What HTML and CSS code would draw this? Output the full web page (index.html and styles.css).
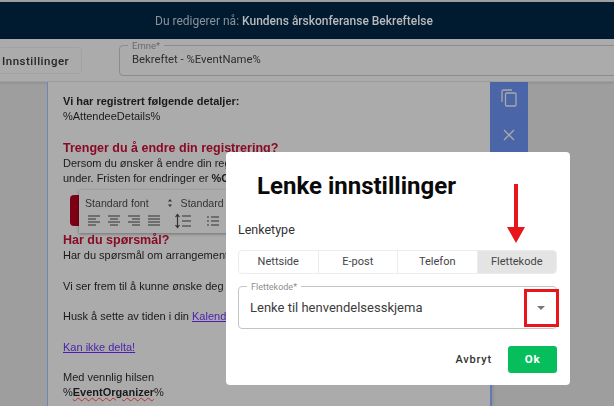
FILE: index.html
```html
<!DOCTYPE html>
<html lang="no">
<head>
  <meta charset="UTF-8" />
  <title>Lenke innstillinger</title>
  <link rel="stylesheet" href="styles.css">
</head>
<body>
<div class="topbar">Du redigerer nå: <span class="topbar-name">Kundens årskonferanse Bekreftelse</span></div>
<div class="subbar">
  <div class="settings-tab">Innstillinger</div>
  <div class="subject">
    <span class="subject-label">Emne*</span>
    Bekreftet - %EventName%
  </div>
</div>
<div class="workspace">
  <div class="mail">
    <p class="strong">Vi har registrert følgende detaljer:</p>
    <p>%AttendeeDetails%</p>
    <h2 class="first-head">Trenger du å endre din registrering?</h2>
    <p>Dersom du ønsker å endre din registrering</p>
    <p>under. Fristen for endringer er <b>%C</b></p>
    <div class="cta-row"><span class="cta"></span></div>
    <h2>Har du spørsmål?</h2>
    <p>Har du spørsmål om arrangementet</p>
    <p class="gap">Vi ser frem til å kunne ønske deg</p>
    <p class="gap">Husk å sette av tiden i din <a href="#">Kalender</a></p>
    <p class="gap"><a href="#">Kan ikke delta!</a></p>
    <p class="gap">Med vennlig hilsen</p>
    <p>%<b class="squiggle">EventOrganizer</b>%</p>
  </div>
  <div class="side-actions">
    <svg width="16" height="18" viewBox="0 0 16 18" fill="none" stroke="#a9a9a9" stroke-width="1.3"><path d="M11 1H2.500A1.500 1.500 0 0 0 1 2.500V13"/><rect x="4.500" y="4" width="10.500" height="13" rx="1.200"/></svg>
    <svg width="12" height="12" viewBox="0 0 12 12" stroke="#a9a9a9" stroke-width="1.300"><path d="M1 1l10 10M11 1L1 11"/></svg>
  </div>
  <div class="toolbar">
    <div class="tool-row">
      <span class="tool-font">Standard font</span>
      <svg class="tool-caret" width="6" height="10" viewBox="0 0 6 10" fill="#333"><path d="M3 1l2 2.500H1zM3 9L1 6.500h4z"/></svg>
      <span>Standard</span>
    </div>
    <div class="tool-row tool-icons">
      <svg width="16" height="14" viewBox="0 0 16 14" stroke="#333" stroke-width="1.1"><path d="M2 2h12M2 5h8M2 8h12M2 11h8"/></svg>
      <svg width="16" height="14" viewBox="0 0 16 14" stroke="#333" stroke-width="1.1"><path d="M2 2h12M4 5h8M2 8h12M4 11h8"/></svg>
      <svg width="16" height="14" viewBox="0 0 16 14" stroke="#333" stroke-width="1.1"><path d="M2 2h12M6 5h8M2 8h12M6 11h8"/></svg>
      <svg width="16" height="14" viewBox="0 0 16 14" stroke="#333" stroke-width="1.1"><path d="M2 2h12M2 5h12M2 8h12M2 11h12"/></svg>
      <svg class="tool-lh" width="18" height="16" viewBox="0 0 18 16" fill="none" stroke="#333" stroke-width="1.2"><path d="M3.500 2v12M1.500 4l2-2.500 2 2.500M1.500 12l2 2.500 2-2.500M8 3h9M8 8h9M8 13h9"/></svg>
      <svg class="tool-list" width="14" height="14" viewBox="0 0 14 14" stroke="#333" stroke-width="1.1"><path d="M1 3h2M5 3h8M1 7h2M5 7h8M1 11h2M5 11h8"/></svg>
    </div>
  </div>
</div>

<div class="dialog">
  <h1 class="dialog-title">Lenke innstillinger</h1>
  <div class="dialog-label">Lenketype</div>
  <div class="link-types">
    <div class="link-type">Nettside</div>
    <div class="link-type">E-post</div>
    <div class="link-type">Telefon</div>
    <div class="link-type selected">Flettekode</div>
  </div>
  <div class="merge-field">
    <span class="merge-label">Flettekode*</span>
    <span>Lenke til henvendelsesskjema</span>
    <span class="merge-caret"></span>
  </div>
  <div class="dialog-actions">
    <span class="cancel">Avbryt</span>
    <span class="ok">Ok</span>
  </div>
</div>

<div class="arrow-line"></div>
<div class="arrow-head"></div>
<div class="red-box"></div>
</body>
</html>
```

FILE: styles.css
```css
html, body {
  margin: 0;
  height: 406px;
  overflow: hidden;
}
body {
  font-family: "Liberation Sans", Arial, sans-serif;
  background: #9e9e9e;
  position: relative;
  color: #1a1a1a;
  padding-top: 2px;
  box-sizing: border-box;
  filter: blur(0.3px);
}
.topbar {
  height: 37px;
  background: #001a30;
  color: #8b929a;
  font-family: Roboto, sans-serif;
  font-size: 12px;
  display: flex;
  align-items: center;
  justify-content: center;
  gap: 3px;
  padding-right: 26px;
}
.topbar-name {
  color: #b8babc;
  font-weight: 500;
}
.subbar {
  height: 43px;
  background: #ababab;
  border-bottom: 1px solid #a0a0a0;
  box-shadow: 0 1px 2px rgba(0,0,0,0.12);
  display: flex;
  align-items: flex-start;
  gap: 37px;
  font-family: Roboto, sans-serif;
  box-sizing: border-box;
}
.settings-tab {
  width: 84px;
  height: 27px;
  margin-top: 8px;
  margin-left: -2px;
  padding-left: 3px;
  border: 1px solid #a2a2a2;
  border-radius: 4px;
  font-size: 11.500px;
  font-weight: 500;
  letter-spacing: 0.5px;
  line-height: 27px;
  color: #262626;
  box-sizing: border-box;
  flex: none;
}
.subject {
  position: relative;
  flex: 1;
  height: 31px;
  margin-top: 6px;
  margin-right: -10px;
  padding-left: 12px;
  border: 1px solid #8c8c8c;
  border-radius: 4px;
  font-size: 11.300px;
  line-height: 28px;
  color: #2e2e2e;
  box-sizing: border-box;
}
.subject-label {
  position: absolute;
  top: -6px;
  left: 8px;
  padding: 0 4px;
  background: #ababab;
  font-size: 9.500px;
  line-height: 11px;
  color: #6a6a6a;
}
.workspace {
  position: relative;
  height: 324px;
}
.mail {
  position: absolute;
  top: 0;
  left: 47px;
  width: 445px;
  height: 100%;
  padding: 12px 0 0 15px;
  box-sizing: border-box;
  background: #ababab;
  border-left: 1px solid #6d86b8;
  border-right: 2px solid #5f7ab4;
  box-shadow: 2px 0 2px rgba(0,0,0,0.08);
  font-size: 11px;
  line-height: 15.250px;
}
.mail p {
  margin: 0;
  white-space: nowrap;
}
.mail .strong {
  font-weight: bold;
}
.mail .gap {
  margin-top: 15.250px;
}
.mail h2 {
  margin: 0;
  font-size: 12.500px;
  line-height: 16px;
  color: #8a0a25;
}
.mail .first-head {
  margin-top: 15.500px;
}
.mail a {
  color: #4a1eb0;
}
.cta-row {
  height: 45.500px;
  padding-top: 8px;
  box-sizing: border-box;
}
.cta {
  display: block;
  width: 20px;
  height: 31px;
  border-radius: 4px;
  background: #7d0015;
  margin-left: 7px;
}
.squiggle {
  text-decoration: underline wavy #c03030 1px;
}
.side-actions {
  position: absolute;
  top: 0;
  left: 490px;
  width: 38px;
  height: 72px;
  background: #4a66a8;
  display: flex;
  flex-direction: column;
  align-items: center;
  padding-top: 7px;
  gap: 22px;
  box-sizing: border-box;
}
.toolbar {
  position: absolute;
  top: 108px;
  left: 79px;
  width: 170px;
  height: 43px;
  background: #ababab;
  box-shadow: 0 1px 3px rgba(0,0,0,0.35);
  padding: 5px 6px 0;
  box-sizing: border-box;
  font-size: 10.600px;
  color: #333;
  white-space: nowrap;
}
.tool-row {
  display: flex;
  align-items: center;
  height: 15px;
}
.tool-caret {
  margin: 0 8px 0 18px;
  flex: none;
}
.tool-icons {
  gap: 4px;
  margin-top: 3px;
  margin-left: 1px;
}
.tool-lh {
  margin-left: 8px;
}
.tool-list {
  margin-left: 10px;
}
.dialog {
  position: absolute;
  left: 226px;
  top: 152px;
  width: 344px;
  height: 233px;
  background: #fff;
  border-radius: 4px;
  padding: 0 13px 0 12px;
  box-sizing: border-box;
  font-family: Roboto, sans-serif;
}
.dialog-title {
  margin: 19px 0 0 19px;
  font-size: 24px;
  line-height: 30px;
  font-weight: 700;
  color: #0a0a0a;
}
.dialog-label {
  margin-top: 21px;
  font-size: 12.500px;
  line-height: 16px;
  color: #333;
}
.link-types {
  display: flex;
  height: 24px;
  margin-top: 12px;
  border: 1px solid #ececec;
  border-radius: 4px;
  font-size: 11px;
  color: #444;
  overflow: hidden;
  box-sizing: border-box;
}
.link-type {
  flex: 1;
  text-align: center;
  line-height: 22px;
  border-left: 1px solid #ececec;
}
.link-type:first-child {
  border-left: none;
}
.link-type.selected {
  background: #e4e4e4;
}
.merge-field {
  position: relative;
  height: 43px;
  margin-top: 12px;
  padding-left: 11px;
  border: 1px solid #c4c4c4;
  border-radius: 4px;
  font-size: 13px;
  line-height: 41px;
  color: #3c3c3c;
  box-sizing: border-box;
}
.merge-label {
  position: absolute;
  top: -5px;
  left: 8px;
  padding: 0 4px;
  background: #fff;
  font-size: 9px;
  line-height: 11px;
  color: #8f8f8f;
}
.merge-caret {
  position: absolute;
  top: 19px;
  right: 11px;
  width: 0;
  height: 0;
  border-left: 4px solid transparent;
  border-right: 4px solid transparent;
  border-top: 4px solid #777;
}
.dialog-actions {
  display: flex;
  justify-content: flex-end;
  align-items: center;
  gap: 16px;
  margin-top: 17px;
}
.cancel {
  font-size: 11px;
  font-weight: 500;
  letter-spacing: 0.8px;
  color: #333;
}
.ok {
  width: 49px;
  height: 27px;
  background: #06bf5c;
  border-radius: 3px;
  text-align: center;
  line-height: 27px;
  color: #fff;
  font-size: 11.500px;
  font-weight: 700;
  letter-spacing: 0.8px;
}
/* annotation drawn on top of the screenshot */
.arrow-line {
  position: absolute;
  left: 514px;
  top: 184px;
  width: 4px;
  height: 44px;
  background: #e8161b;
}
.arrow-head {
  position: absolute;
  left: 507px;
  top: 227px;
  width: 0;
  height: 0;
  border-left: 9px solid transparent;
  border-right: 9px solid transparent;
  border-top: 16px solid #e8161b;
}
.red-box {
  position: absolute;
  left: 524px;
  top: 289px;
  width: 35px;
  height: 38px;
  border: 3px solid #e8161b;
  box-sizing: border-box;
}
```
